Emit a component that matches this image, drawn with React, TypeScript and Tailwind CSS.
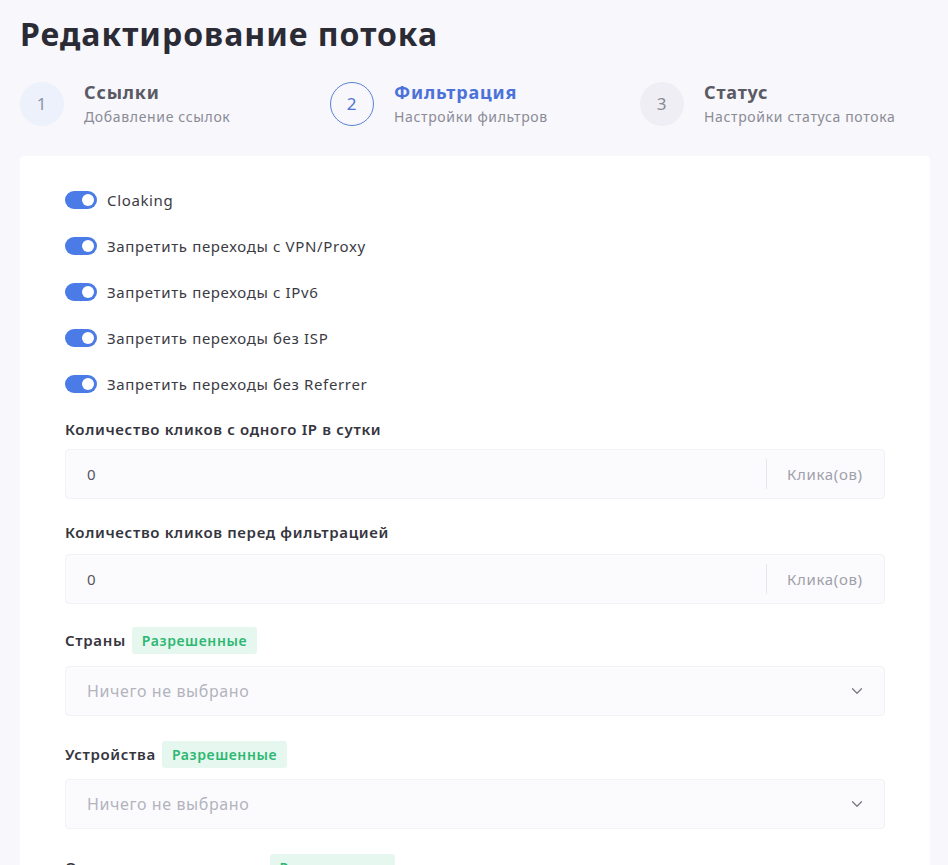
import { ChevronDown } from 'lucide-react';

const toggles = [
  'Cloaking',
  'Запретить переходы с VPN/Proxy',
  'Запретить переходы с IPv6',
  'Запретить переходы без ISP',
  'Запретить переходы без Referrer',
];

const steps = [
  { n: 1, title: 'Ссылки', sub: 'Добавление ссылок', state: 'done' },
  { n: 2, title: 'Фильтрация', sub: 'Настройки фильтров', state: 'active' },
  { n: 3, title: 'Статус', sub: 'Настройки статуса потока', state: 'todo' },
];

function Toggle() {
  return (
    <span className="relative inline-flex h-[18px] w-[32px] shrink-0 items-center rounded-full bg-[#4a7be6]">
      <span className="absolute right-[3px] h-[12px] w-[12px] rounded-full bg-white" />
    </span>
  );
}

function Badge() {
  return (
    <span className="ml-[6px] inline-flex h-[27px] items-center rounded-[3px] bg-[#e6f7ef] px-[10px] text-[14px] font-semibold tracking-[0.6px] text-[#2eb772]">
      Разрешенные
    </span>
  );
}

function NumberInput() {
  return (
    <div className="flex h-[50px] items-center rounded-[4px] border border-[#f1f1f6] bg-[#fbfbfe]">
      <span className="flex-1 pl-[21px] text-[15px] text-[#55555f]">0</span>
      <span className="h-[30px] w-px bg-[#e6e6ec]" />
      <span className="w-[117px] pl-[20px] text-[15px] text-[#a0a0aa]">Клика(ов)</span>
    </div>
  );
}

function Select() {
  return (
    <div className="flex h-[50px] items-center rounded-[4px] border border-[#f1f1f6] bg-[#fbfbfe] pl-[21px] pr-[18px]">
      <span className="flex-1 text-[16px] tracking-[0.6px] text-[#b3b3bd]">Ничего не выбрано</span>
      <ChevronDown size={18} strokeWidth={1.6} className="text-[#77777f]" />
    </div>
  );
}

export default function App() {
  return (
    <div
      className="min-h-[865px] bg-[#f7f7fc] px-5 pt-[14px] tracking-[0.65px]"
      style={{ fontFamily: '"Noto Sans", "Open Sans", sans-serif' }}
    >
      {/* Header */}
      <h1 className="text-[32px] font-bold leading-[40px] tracking-[1px] text-[#2b2b36]">Редактирование потока</h1>

      {/* Stepper */}
      <div className="mt-[27px] flex">
        {steps.map((s) => (
          <div key={s.n} className="flex w-[310px] shrink-0 items-center gap-5">
            <div
              className={
                s.state === 'active'
                  ? 'flex h-[44px] w-[44px] items-center justify-center rounded-full border border-[#5b80dd] text-[17px] text-[#4f74d4]'
                  : s.state === 'done'
                  ? 'flex h-[44px] w-[44px] items-center justify-center rounded-full bg-[#edf1fb] text-[17px] text-[#8c95a8]'
                  : 'flex h-[44px] w-[44px] items-center justify-center rounded-full bg-[#eeeef4] text-[17px] text-[#8a8a94]'
              }
            >
              {s.n}
            </div>
            <div className="flex flex-col">
              <span
                className={
                  s.state === 'active'
                    ? 'text-[18px] font-bold leading-[22px] tracking-[0.8px] text-[#4b72d9]'
                    : 'text-[18px] font-bold leading-[22px] tracking-[0.8px] text-[#5a5a64]'
                }
              >
                {s.title}
              </span>
              <span className="mt-[5px] text-[14px] leading-[18px] text-[#8b8b95]">{s.sub}</span>
            </div>
          </div>
        ))}
      </div>

      {/* Card */}
      <div className="mt-[30px] w-[910px] rounded-t-[4px] bg-white px-[45px] pt-[34px] pb-10">
        <div className="flex flex-col gap-[26px]">
          {toggles.map((t) => (
            <label key={t} className="flex h-[20px] items-center gap-[10px] text-[15px] text-[#3b3b44]">
              <Toggle />
              {t}
            </label>
          ))}
        </div>

        <div className="mt-[25px] text-[15px] font-semibold leading-[20px] text-[#35353e]">
          Количество кликов с одного IP в сутки
        </div>
        <div className="mt-[10px]">
          <NumberInput />
        </div>

        <div className="mt-[23px] text-[15px] font-semibold leading-[20px] text-[#35353e]">
          Количество кликов перед фильтрацией
        </div>
        <div className="mt-[12px]">
          <NumberInput />
        </div>

        <div className="mt-[23px] flex h-[27px] items-center text-[15px] font-semibold text-[#35353e]">
          Страны
          <Badge />
        </div>
        <div className="mt-[12px]">
          <Select />
        </div>

        <div className="mt-[25px] flex h-[27px] items-center text-[15px] font-semibold text-[#35353e]">
          Устройства
          <Badge />
        </div>
        <div className="mt-[11px]">
          <Select />
        </div>

        <div className="mt-[25px] flex h-[27px] items-center text-[15px] font-semibold text-[#35353e]">
          Операционные системы
          <Badge />
        </div>
        <div className="mt-[11px]">
          <Select />
        </div>
      </div>
    </div>
  );
}
